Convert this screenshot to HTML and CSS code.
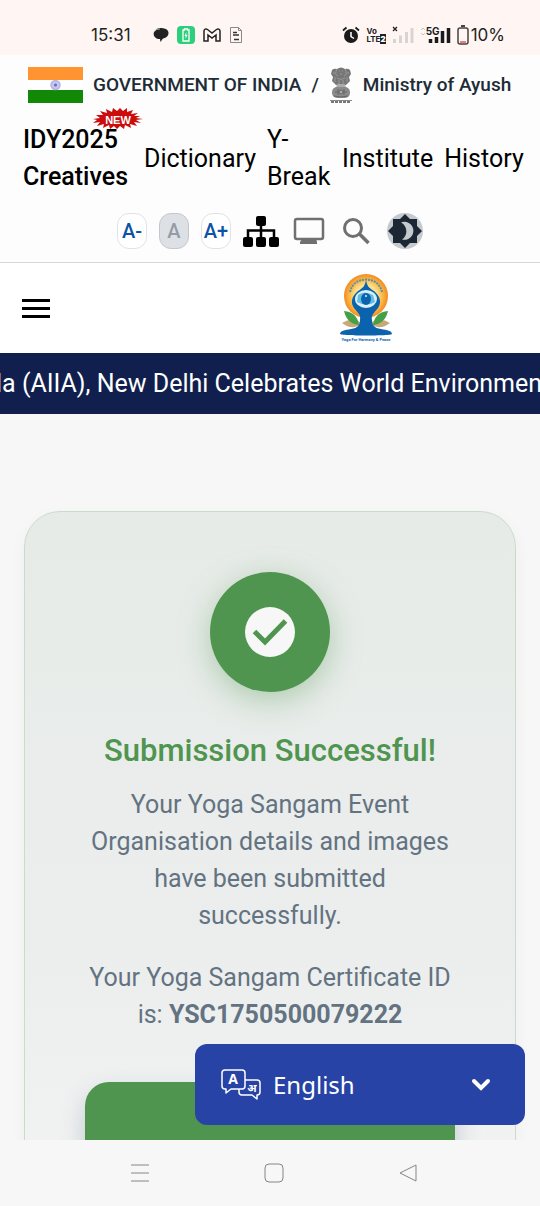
FILE: index.html
```html
<!DOCTYPE html>
<html lang="en">
<head>
    <meta charset="UTF-8">
    <meta name="viewport" content="width=device-width, initial-scale=1.0">
    <title>Submission Successful</title>
    <link rel="stylesheet" href="styles.css">
</head>
<body>
    <!-- Phone status bar -->
    <div class="status-bar">
        <div class="status-left">
            <span class="clock">15:31</span>
            <svg width="16" height="16" viewBox="0 0 16 16" aria-hidden="true">
                <path fill="#222" d="M4 2C6 .5 13 .5 15 4c1.500 3-.5 7-5 7.500L7.500 15 7 12C2 12-.5 8 1.200 4.800z"/>
                <path d="M1 5C2 3 4 2 7 2" stroke="#aaa" fill="none"/>
            </svg>
            <svg width="18" height="18" viewBox="0 0 18 18" aria-hidden="true">
                <rect width="18" height="18" rx="4" fill="#2dce7c"/>
                <path d="M7.500 4V3h3v1H12v11H6V4z" fill="none" stroke="#fff" stroke-width="1.300"/>
                <path d="M9.500 6 7.500 10h1.200L8.500 13l2-4H9.300z" fill="#fff"/>
            </svg>
            <svg width="18" height="14" viewBox="0 0 18 14" aria-hidden="true">
                <path d="M1 3v10h4V7l4 3 4-3v6h4V3c0-2-2-2.500-3.500-1.500L9 5 4.500 1.500C3 .5 1 1 1 3z" fill="none" stroke="#222" stroke-width="1.500"/>
            </svg>
            <svg width="14" height="16" viewBox="0 0 14 16" aria-hidden="true">
                <path d="M1.500.5h8l3 3v12h-11zM9.500.5v3h3" fill="none" stroke="#888"/>
                <path d="M4 5.500h4M4 8h6M5 12.500h5" stroke="#333" stroke-width="1.500"/>
            </svg>
        </div>
        <div class="status-right">
            <svg width="18" height="18" viewBox="0 0 18 18" aria-hidden="true">
                <circle cx="9" cy="10" r="7" fill="#1a1a1a"/>
                <path d="M1 4.500 4.500 1.500M17 4.500l-3.500-3" stroke="#1a1a1a" stroke-width="1.800"/>
                <path d="M9 6v4.500l3 2" fill="none" stroke="#fff" stroke-width="1.500"/>
            </svg>
            <span class="volte"><span>Vo</span><span>LTE<b>2</b></span></span>
            <svg width="22" height="18" viewBox="0 0 22 18" aria-hidden="true">
                <path d="M1 1l4 4M5 1 1 5" stroke="#222" stroke-width="1.300"/>
                <path d="M2.500 17v-4M8.500 17V9.500M14.500 17V6M20 17V2" stroke="#d9d3d1" stroke-width="3"/>
            </svg>
            <span class="signal">
                <svg width="31" height="18" viewBox="0 0 31 18" aria-hidden="true">
                    <path d="M1 4 3 2l2 2M1 7l2 2 2-2" fill="none" stroke="#c8c2c0"/>
                    <path d="M10.500 17v-4M16.500 17v-6M22.500 17V5M28.500 17V2" stroke="#1a1a1a" stroke-width="3.500"/>
                </svg>
                <span class="signal-type">5G</span>
            </span>
            <svg width="12" height="20" viewBox="0 0 12 20" aria-hidden="true">
                <path d="M4 1h4" stroke="#444" stroke-width="2"/>
                <rect x="1" y="3" width="10" height="16" rx="2" fill="none" stroke="#444" stroke-width="1.500"/>
                <path d="M3 17h6" stroke="#e8574a" stroke-width="1.500"/>
            </svg>
            <span class="battery">10%</span>
        </div>
    </div>

    <div class="page">
        <header class="top">
            <div class="gov">
                <svg width="55" height="36" viewBox="0 0 55 36" role="img" aria-label="Flag of India">
                    <rect width="55" height="36" fill="#fff"/>
                    <rect width="55" height="13" fill="#ff9430"/>
                    <rect y="23" width="55" height="13" fill="#128807"/>
                    <circle cx="27.500" cy="18" r="4.500" fill="#c5c5ee" stroke="#b4b4e4" stroke-width="1.500"/>
                    <circle cx="27.500" cy="18" r="1.500" fill="#6a6ac0"/>
                </svg>
                <a href="#">GOVERNMENT OF INDIA</a>
                <span>/</span>
                <svg class="emblem" width="24" height="36" viewBox="0 0 24 36" role="img" aria-label="State emblem">
                    <path d="M3 3q2-2 5-1 4-3 8 0 3-1 5 1l1 4-2 3 1 4-4 4H7l-4-4 1-4-2-3z" fill="#777"/>
                    <path d="M8 2q-3 6 1 7M16 2q3 6-1 7M10 4h1M13 4h1M11 7h2M4 6h2M18 6h2M8 11q4 3 8 0M6 10v5M18 10v5M10 13v4M14 13v4" fill="none" stroke="#999"/>
                    <path d="M8 17h8l1 4H7z" fill="#aaa"/>
                    <rect x="3" y="20" width="18" height="11" rx="5" fill="#8a8a8a"/>
                    <path d="M6 25h12M5 29q7 2 14 0M9 22v6M15 22v6" fill="none" stroke="#666"/>
                    <circle cx="12" cy="25" r="2" fill="#aaa" stroke="#666"/>
                    <path d="M1 33.500h22" stroke="#888"/>
                    <path d="M2 35h20" stroke="#777" stroke-width="2" stroke-dasharray="3 1"/>
                </svg>
                <a href="#">Ministry of Ayush</a>
            </div>
            <nav class="menu">
                <a class="featured" href="#">
                    IDY2025 Creatives
                    <span class="new-badge">
                        <svg width="50" height="23" viewBox="0 0 50 23" aria-hidden="true">
                            <path fill="#cb0d0d" d="M0 11l7-1-4-3 7 0-3-4 7 2-1-4 6 3 1-4 4 3 3-3 3 3 4-3 0 4 6-2-2 4 7-1-4 3 6 0-4 2 7 1-7 1 5 3-7-1 3 4-7-2 1 4-6-3-1 4-4-3-3 3-3-3-4 3-1-4-6 3 1-4-7 2 3-4-7 1 4-3z"/>
                        </svg>
                        <span>NEW</span>
                    </span>
                </a>
                <a href="#">Dictionary</a>
                <a class="narrow" href="#">Y-Break</a>
                <a href="#">Institute</a>
                <a href="#">History</a>
            </nav>
            <div class="tools">
                <button class="size-btn" type="button">A-</button>
                <button class="size-btn current" type="button">A</button>
                <button class="size-btn" type="button">A+</button>
                <button class="icon-btn" type="button" aria-label="Sitemap">
                    <svg width="36" height="36" viewBox="0 0 36 36">
                        <path d="M18 10v16M5 25v-7.500h26V25" fill="none" stroke="#000" stroke-width="2.500"/>
                        <rect x="13" y="3" width="10" height="10" rx="2"/>
                        <rect x="0" y="24" width="10" height="10" rx="2"/>
                        <rect x="13" y="24" width="10" height="10" rx="2"/>
                        <rect x="26" y="24" width="10" height="10" rx="2"/>
                    </svg>
                </button>
                <button class="icon-btn" type="button" aria-label="Screen reader">
                    <svg width="36" height="36" viewBox="0 0 36 36">
                        <rect x="4" y="6" width="28" height="20" rx="2" fill="none" stroke="#707070" stroke-width="2.500"/>
                        <path d="M11 26h14l1 3v2H9v-2z" fill="#707070"/>
                    </svg>
                </button>
                <button class="icon-btn" type="button" aria-label="Search">
                    <svg width="36" height="36" viewBox="0 0 36 36">
                        <circle cx="14" cy="15" r="8.500" fill="none" stroke="#707070" stroke-width="3"/>
                        <path d="M20 20.500 29.500 30" stroke="#707070" stroke-width="3.500"/>
                    </svg>
                </button>
                <button class="icon-btn" type="button" aria-label="Dark mode">
                    <svg width="36" height="36" viewBox="0 0 36 36">
                        <circle cx="18" cy="18" r="18" fill="#c5cacf"/>
                        <path fill="#1b2733" d="M18 1l5 5h7v7l5 5-5 5v7h-7l-5 5-5-5H6v-7l-5-5 5-5V6h7z"/>
                        <path fill="#c5cacf" d="M14 9.500a9 9 0 1 1 1 17C21 23 21 13 14 9.500z"/>
                    </svg>
                </button>
            </div>
        </header>

        <div class="brand">
            <button class="hamburger" type="button" aria-label="Menu"><i></i><i></i><i></i></button>
            <a class="brand-logo" href="#" aria-label="International Day of Yoga">
                <svg width="54" height="70" viewBox="0 0 54 70">
                    <defs>
                        <radialGradient id="sun">
                            <stop offset="50%" stop-color="#fde08a"/>
                            <stop offset="80%" stop-color="#fbb03b"/>
                            <stop offset="100%" stop-color="#f08a24"/>
                        </radialGradient>
                    </defs>
                    <circle cx="27" cy="23" r="22" fill="url(#sun)"/>
                    <path d="M11 19Q14 7 27 6.500 40 7 43 19" fill="none" stroke="#5b8fae" stroke-width="2" stroke-dasharray="2 1"/>
                    <path d="M3 50q11-7 21 1-11 7-21-1zM51 50q-11-7-21 1 11 7 21-1z" fill="#c9a876"/>
                    <path d="M5 38q13 1 15 14Q8 51 5 38zM49 38q-13 1-15 14 12-1 15-14z" fill="#43a047"/>
                    <path fill="#0c63ad" d="M27 7c1 6 3 8 8 11 6 5 8 11 4 17-4 5-7 7-6 12 0 5 2 8 9 9 6 1 11 2 11 5 0 2-52 2-52 0 0-3 5-4 11-5 7-1 9-4 9-9 1-5-2-7-6-12-4-6-2-12 4-17 5-3 7-5 8-11z"/>
                    <ellipse cx="27" cy="26" rx="11" ry="9" fill="#d8f0fa"/>
                    <path d="M19 22q6-5 15 0l2 7q-8 5-18 0z" fill="#63bde2"/>
                    <ellipse cx="27" cy="26" rx="5" ry="6" fill="#0c63ad"/>
                    <circle cx="27" cy="23" r="1" fill="#d9f2fb"/>
                    <text x="27" y="68" text-anchor="middle" class="logo-text">Yoga For Harmony &amp; Peace</text>
                </svg>
            </a>
        </div>

        <div class="ticker"><span>la (AIIA), New Delhi Celebrates World Environment</span></div>

        <main class="content">
            <section class="card">
                <div class="check">
                    <svg width="50" height="50" viewBox="0 0 50 50" aria-hidden="true">
                        <circle cx="25" cy="25" r="25" fill="#f6f7f6"/>
                        <path d="M9.500 24.500 20 35 40.500 14" fill="none" stroke="#4f954f" stroke-width="5"/>
                    </svg>
                </div>
                <h1>Submission Successful!</h1>
                <p>Your Yoga Sangam Event Organisation details and images have been submitted successfully.</p>
                <p>Your Yoga Sangam Certificate ID is: <strong>YSC1750500079222</strong></p>
                <button class="action" type="button" aria-label="Download certificate"></button>
            </section>
        </main>

        <div class="language">
            <label for="lang" aria-label="Language">
                <svg width="40" height="32" viewBox="0 0 40 32" fill="none" stroke="#fff" stroke-width="1.500" stroke-linejoin="round">
                    <path d="M4 1h17q3 0 3 3v13q0 3-3 3H10l-5 4v-4H4q-3 0-3-3V4q0-3 3-3z"/>
                    <path d="M24 11h12q3 0 3 3v9q0 3-3 3v4l-5-4H21q-3 0-3-3v-3"/>
                    <text x="12" y="15" text-anchor="middle" class="icon-text">A</text>
                    <text x="31" y="23" text-anchor="middle" class="icon-text small">अ</text>
                </svg>
            </label>
            <select id="lang">
                <option>English</option>
            </select>
            <svg class="arrow" width="20" height="14" viewBox="0 0 20 14" aria-hidden="true">
                <path d="M3 3l7 7 7-7" fill="none" stroke="#fff" stroke-width="4" stroke-linecap="round"/>
            </svg>
        </div>
    </div>

    <!-- Phone navigation bar -->
    <div class="nav-bar">
        <button type="button" aria-label="Recent apps">
            <svg width="20" height="20" viewBox="0 0 20 20"><path d="M1 2h18M1 10h18M1 18h18"/></svg>
        </button>
        <button type="button" aria-label="Home">
            <svg width="20" height="20" viewBox="0 0 20 20"><rect x="1" y="1" width="18" height="18" rx="4"/></svg>
        </button>
        <button type="button" aria-label="Back">
            <svg width="20" height="20" viewBox="0 0 20 20"><path d="M18 2v16L2 10z" stroke-linejoin="round"/></svg>
        </button>
    </div>
</body>
</html>
```
FILE: styles.css
```css
* {
    box-sizing: border-box;
}
body {
    margin: 0;
    height: 100vh;
    display: flex;
    flex-direction: column;
    overflow: hidden;
    font-family: Roboto, sans-serif;
    font-size: 25px;
    line-height: 37px;
    color: #000;
    background-color: #f7f7f7;
}
a {
    color: inherit;
    text-decoration: none;
}
button {
    font-family: inherit;
    padding: 0;
    border: none;
    background: none;
}
svg {
    display: block;
    flex: none;
}

/* status bar */
.status-bar {
    display: flex;
    justify-content: space-between;
    align-items: center;
    padding: 14px 35px 0 91px;
    height: 55px;
    flex: none;
    background-color: #fff6f3;
    font-family: Inter, sans-serif;
    font-size: 17px;
    line-height: 20px;
    color: #222;
}
.status-left,
.status-right {
    display: flex;
    align-items: center;
}
.status-left {
    gap: 8px;
}
.clock {
    margin-right: 14px;
}
.status-right {
    gap: 6px;
}
.volte {
    display: flex;
    flex-direction: column;
    font-size: 8px;
    line-height: 8px;
    font-weight: 700;
}
.volte b {
    background-color: #222;
    color: #fff;
}
.signal {
    position: relative;
}
.signal-type {
    position: absolute;
    left: 6px;
    top: 0;
    font-size: 10px;
    line-height: 10px;
    font-weight: 700;
    background-color: #fff6f3;
}
.battery {
    margin-left: -4px;
}

/* header */
.page {
    flex: 1;
    min-height: 0;
    position: relative;
    overflow: hidden;
}
.top {
    padding: 12px 12px 13px;
    border-bottom: 1px solid #d8d8d8;
    background-color: #fdfdfd;
}
.gov {
    display: flex;
    align-items: center;
    gap: 10px;
    padding-left: 16px;
    font-size: 19px;
    line-height: 36px;
    font-weight: 500;
    color: #212b36;
    white-space: nowrap;
}
.menu {
    display: flex;
    align-items: center;
    gap: 11px;
    padding: 18px 0 18px 11px;
}
.featured {
    position: relative;
    flex: none;
    width: 110px;
    font-weight: 500;
}
.narrow {
    flex: none;
    width: 64px;
}
.new-badge {
    position: absolute;
    left: 70px;
    top: -13px;
    display: grid;
    place-items: center;
}
.new-badge > * {
    grid-area: 1 / 1;
}
.new-badge span {
    font-family: "Liberation Sans", sans-serif;
    font-size: 11px;
    line-height: 12px;
    font-weight: 700;
    color: #fff;
}
.tools {
    display: flex;
    justify-content: center;
    gap: 12px;
}
.size-btn {
    width: 30px;
    height: 36px;
    border: 1px solid #dfe3e8;
    border-radius: 12px;
    background-color: #fff;
    color: #0b53a5;
    font-size: 20px;
    font-weight: 500;
}
.size-btn.current {
    background-color: #dde1e6;
    border-color: #c4c8cc;
    color: #959ca5;
}
.brand {
    display: flex;
    align-items: center;
    padding: 10px 22px;
    background-color: #fff;
}
.hamburger {
    display: flex;
    flex-direction: column;
    gap: 5px;
    width: 28px;
}
.hamburger i {
    height: 3px;
    background-color: #000;
}
.brand-logo {
    margin: 0 auto;
    padding-left: 164px;
}
.logo-text {
    font: 700 4px Roboto, sans-serif;
    fill: #0c63ad;
}
.ticker {
    padding: 12px 0;
    overflow: hidden;
    white-space: nowrap;
    text-indent: -4px;
    background-color: #101f4d;
    color: #fff;
}

/* card */
.content {
    padding: 97px 24px;
}
.card {
    display: flex;
    flex-direction: column;
    align-items: center;
    padding: 60px;
    border: 1px solid #c9dccb;
    border-radius: 36px;
    background: linear-gradient(#e6ebe7, #eceeee 60%, #f3f4f4);
    box-shadow: 0 6px 18px rgba(0, 0, 0, 0.04);
    text-align: center;
    color: #637381;
}
.check {
    display: grid;
    place-items: center;
    width: 120px;
    height: 120px;
    margin-bottom: 36px;
    border-radius: 50%;
    background-color: #4f954f;
    box-shadow: 0 8px 32px rgba(79, 149, 79, 0.4);
}
.card h1 {
    margin: 0 0 12px;
    font-size: 31px;
    line-height: 46px;
    font-weight: 500;
    color: #4f954f;
}
.card p {
    margin: 0 0 25px;
}
.action {
    align-self: stretch;
    height: 100px;
    margin-top: 24px;
    border-radius: 24px;
    background-color: #4f954f;
    box-shadow: 0 12px 24px rgba(80, 110, 130, 0.3);
}

/* language switcher */
.language {
    position: absolute;
    right: 15px;
    bottom: 15px;
    display: flex;
    align-items: center;
    width: 330px;
    height: 81px;
    border-radius: 12px;
    background-color: #2743a6;
}
.language label {
    position: absolute;
    left: 26px;
    pointer-events: none;
}
.language select {
    width: 100%;
    height: 100%;
    padding: 0 60px 0 78px;
    border: none;
    appearance: none;
    background: none;
    font-family: "Noto Sans", sans-serif;
    font-size: 24px;
    color: #fff;
}
.arrow {
    position: absolute;
    right: 34px;
    pointer-events: none;
}
.icon-text {
    font: 700 14px "Noto Sans", sans-serif;
    fill: #fff;
    stroke: none;
}
.icon-text.small {
    font-size: 11px;
}

/* bottom bar */
.nav-bar {
    display: flex;
    justify-content: center;
    align-items: center;
    gap: 114px;
    height: 66px;
    flex: none;
    padding-left: 8px;
    background-color: #f7f7f7;
}
.nav-bar svg {
    fill: none;
    stroke: #858585;
    stroke-width: 1;
}
```
